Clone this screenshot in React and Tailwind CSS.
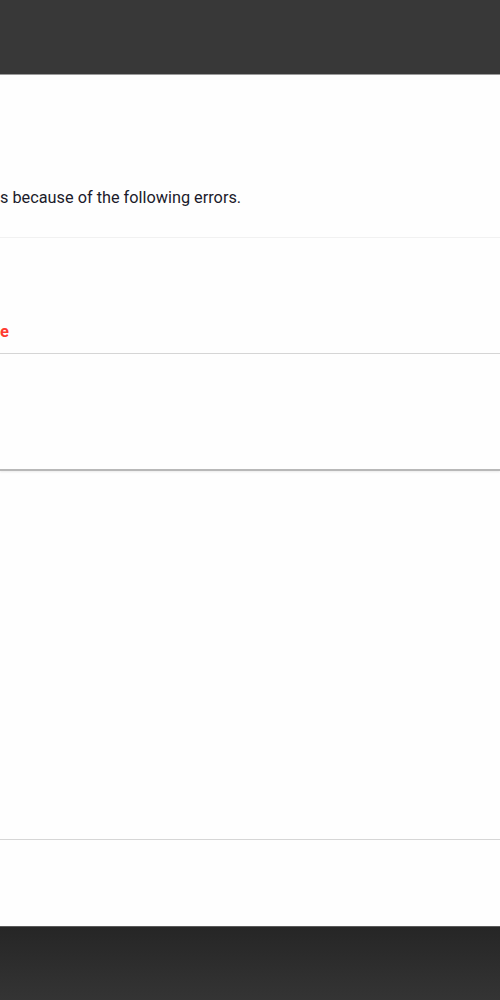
import React from 'react';

const App = () => {
  return (
    <div className="w-[500px] h-[1000px] overflow-hidden flex flex-col bg-[#fefefe]" style={{ fontFamily: 'Roboto, "Liberation Sans", sans-serif' }}>
      <div className="h-[75px] shrink-0 bg-[#383838] border-b border-[#9a9a9a]" />
      <div className="h-[163px] shrink-0 border-b border-[#f1f1f1] pt-[111px]">
        <p className="whitespace-nowrap text-[16.3px] leading-6 text-[#1b1b2b]">s because of the following errors.</p>
      </div>
      <div className="h-[116px] shrink-0 border-b border-[#d6d6d6] pt-[82px]">
        <p className="text-[16.5px] leading-6 font-bold text-[#ff3b30]">e</p>
      </div>
      <div className="h-[117px] shrink-0 border-b-2 border-[#b8b8b8] shadow-[0_1px_2px_rgba(0,0,0,0.08)]" />
      <div className="h-[369px] shrink-0 border-b border-[#d6d6d6]" />
      <div className="flex-1" />
      <div className="h-[74px] shrink-0 border-t border-[#5a5a5a] bg-gradient-to-b from-[#262626] to-[#343434]" />
    </div>
  );
};

export default App;
